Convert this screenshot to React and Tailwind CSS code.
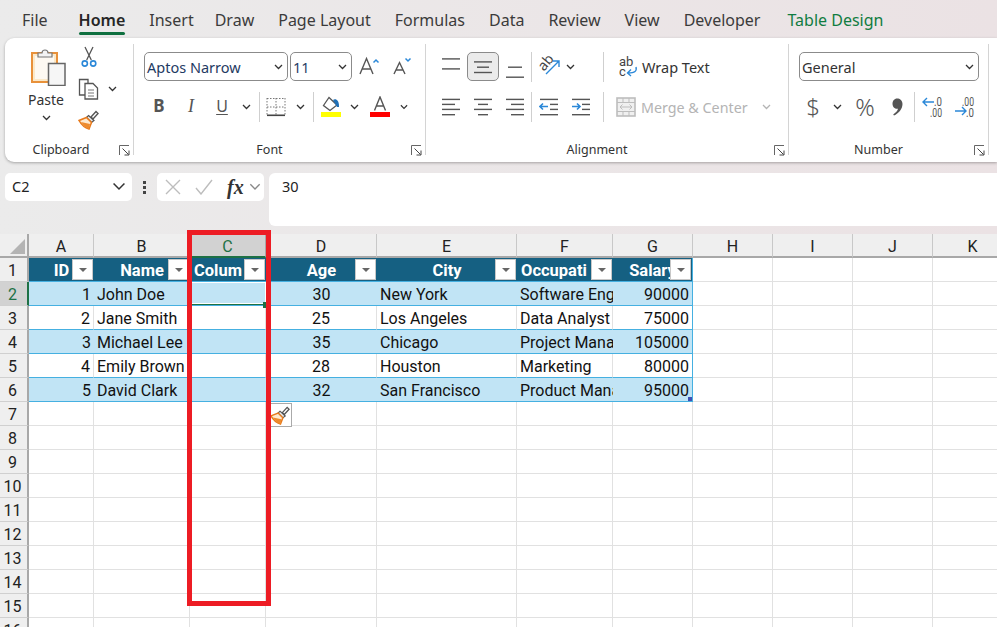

const UI = { fontFamily: '"Noto Sans", sans-serif' };

function Chev({ c = "#333", w = 9, cls = "" }) {
  return (
    <svg width={w} height={(w * 2) / 3} viewBox="0 0 9 6" className={cls}>
      <path d="M1 1l3.5 3.5L8 1" fill="none" stroke={c} strokeWidth={w > 9 ? 1 : 1.3} />
    </svg>
  );
}

function Launcher() {
  return (
    <svg width="11" height="11" viewBox="0 0 11 11">
      <path d="M.5 10V.5H10" fill="none" stroke="#666" />
      <path d="M3.5 3.5l6 6M10 5.5V10H5.5" fill="none" stroke="#444" />
    </svg>
  );
}

function Cell({ w, children, cls = "" }) {
  return (
    <div style={{ width: w }} className={"flex shrink-0 items-center justify-center " + cls}>
      {children}
    </div>
  );
}

function Sep() {
  return <div className="h-[30px] w-px shrink-0 bg-[#cfcfcf]" />;
}

function Lines({ rows }) {
  return (
    <svg width="20" height="20" viewBox="0 0 20 20" className="overflow-visible">
      {rows.map(([x, y, w], i) => (
        <rect key={i} x={x} y={y} width={w} height="1.4" fill="#555" />
      ))}
    </svg>
  );
}

function Group({ width, label, children, sep = true, shift = "pr-[20px]" }) {
  return (
    <div className="flex shrink-0" style={{ width }}>
      <div className="flex min-w-0 flex-1 flex-col">
        <div className="h-[100px]">{children}</div>
        <div className={"relative flex h-[24px] items-center justify-center text-[12.5px] text-[#333] " + shift}>
          {label}
          <span className="absolute right-[3px] top-[7px] flex">
            <Launcher />
          </span>
        </div>
      </div>
      {sep && <div className="mt-[6px] h-[111px] w-px bg-[#d4d4d4]" />}
    </div>
  );
}

function Select({ w, text, textCls = "text-[#1f3b63]" }) {
  return (
    <div
      style={{ width: w }}
      className="flex h-[29px] shrink-0 items-center justify-between rounded-[5px] border border-[#8b8b8b] bg-white pl-[2px] pr-[4px]"
    >
      <span className={"pt-[2px] text-[14.5px] " + textCls}>{text}</span>
      <Chev />
    </div>
  );
}

function PasteIcon() {
  return (
    <svg width="38" height="40" viewBox="0 0 38 40">
      <rect x="3" y="7" width="25" height="29" fill="#fbe9c9" stroke="#e8913a" strokeWidth="2" />
      <rect x="6" y="10" width="19" height="23" fill="#fdf9f2" />
      <path d="M9 11V7h4c0-4 6-4 6 0h4v4z" fill="#f3f3f3" stroke="#777" strokeWidth="1.2" />
      <rect x="19.5" y="17.5" width="16.5" height="22" fill="#f6f6f6" stroke="#666" strokeWidth="1.5" />
    </svg>
  );
}

function CutIcon() {
  return (
    <svg width="16" height="22" viewBox="0 0 16 22">
      <path d="M4 1l6.3 13M12 1L5.7 14" stroke="#555" strokeWidth="1.3" fill="none" />
      <circle cx="3.8" cy="17.5" r="2.6" fill="none" stroke="#2b88d8" strokeWidth="1.6" />
      <circle cx="12.2" cy="17.5" r="2.6" fill="none" stroke="#2b88d8" strokeWidth="1.6" />
    </svg>
  );
}

function CopyIcon() {
  return (
    <svg width="22" height="22" viewBox="0 0 22 22">
      <path d="M9 17H1.5V1.5H10V5" fill="#fff" stroke="#555" strokeWidth="1.3" />
      <path d="M7 5.5h8l4.5 4.5v11H7z" fill="#fff" stroke="#555" strokeWidth="1.3" />
      <path d="M10 12h6M10 15h6M10 18h6" stroke="#777" />
    </svg>
  );
}

function BrushIcon({ s = 21 }) {
  return (
    <svg width={s} height={s} viewBox="0 0 21 21">
      <path d="M13 8L18 2.5L20 4.5L15 10z" fill="#fff" stroke="#555" strokeWidth="1.4" />
      <path d="M10.5 6.5L16 11.5L13.5 13.5L8.5 8.5z" fill="#e8e8e8" stroke="#555" strokeWidth="1.2" />
      <path d="M8.5 8.5L13.5 13.5L11 20C7 19 3 15 1 11.5z" fill="#fde9cf" stroke="#e8791a" strokeWidth="1.5" />
      <path d="M3 13L12 15L11 20C7.5 19 5 16 3 13z" fill="#ed8b2d" />
    </svg>
  );
}

function GrowA({ small }) {
  return (
    <svg width="26" height="24" viewBox="0 0 26 24">
      {small ? (
        <path d="M4 19L9.5 7.5L15 19M6 15h7" fill="none" stroke="#555" strokeWidth="1.4" />
      ) : (
        <path d="M4 19L10.5 3.5L17 19M6.5 14h8" fill="none" stroke="#555" strokeWidth="1.4" />
      )}
      {small ? (
        <path d="M15.5 3.5l2.5 2.5 2.5-2.5" fill="none" stroke="#2b88d8" strokeWidth="1.5" />
      ) : (
        <path d="M17.5 7.5l2.5-2.5 2.5 2.5" fill="none" stroke="#2b88d8" strokeWidth="1.5" />
      )}
    </svg>
  );
}

function BorderIcon() {
  return (
    <svg width="20" height="20" viewBox="0 0 20 20">
      <path d="M1 1.5h18M1 10h18M1 1v17M10 1v17M19 1v17" stroke="#777" strokeDasharray="1.5 1.5" fill="none" />
      <rect x="1" y="17.5" width="18" height="1.6" fill="#444" />
    </svg>
  );
}

function FillIcon() {
  return (
    <svg width="20" height="22" viewBox="0 0 20 22">
      <path d="M8 1.5L16 9L9 14.5L2.5 9.5z" fill="#fff" stroke="#555" strokeWidth="1.3" />
      <path d="M12 4c3-2 6 1 6 6v1h-2z" fill="#1f6fb5" />
      <rect y="16" width="20" height="5" fill="#ffff00" />
    </svg>
  );
}

function ColorA() {
  return (
    <svg width="20" height="22" viewBox="0 0 20 22">
      <path d="M4.5 14.5L10 1l5.5 13.5M6.5 10h7" fill="none" stroke="#555" strokeWidth="1.4" />
      <rect y="16" width="20" height="5" fill="#ff0000" />
    </svg>
  );
}

function OrientIcon() {
  return (
    <svg width="22" height="22" viewBox="0 0 22 22" className="overflow-visible">
      <text x="-1" y="11" fontSize="14" fill="#444" transform="rotate(-50 7 7)" fontFamily="Noto Sans">ab</text>
      <path d="M7 18L20 5M14 5h6v6" fill="none" stroke="#2b88d8" strokeWidth="1.4" />
    </svg>
  );
}

function IndentIcon({ right }) {
  return (
    <svg width="20" height="20" viewBox="0 0 20 20">
      <rect x="1" y="1.7" width="18" height="1.4" fill="#555" />
      <rect x="11" y="6.7" width="8" height="1.4" fill="#555" />
      <rect x="11" y="11.7" width="8" height="1.4" fill="#555" />
      <rect x="1" y="17" width="18" height="1.4" fill="#555" />
      {right ? (
        <path d="M1 9.5h8M6 6.5l3 3-3 3" fill="none" stroke="#2b88d8" strokeWidth="1.6" />
      ) : (
        <path d="M9 9.5H1M4 6.5l-3 3 3 3" fill="none" stroke="#2b88d8" strokeWidth="1.6" />
      )}
    </svg>
  );
}

function WrapIcon() {
  return (
    <svg width="19" height="22" viewBox="0 0 19 22" className="overflow-visible">
      <text x="0" y="10" fontSize="13" fill="#444" fontFamily="Roboto">ab</text>
      <text x="0" y="20" fontSize="13" fill="#444" fontFamily="Roboto">c</text>
      <path d="M17 11c1 4-1 6-8 6M12 13.5L8.5 17l3.5 3" fill="none" stroke="#2b88d8" strokeWidth="1.4" />
    </svg>
  );
}

function MergeIcon() {
  return (
    <svg width="20" height="20" viewBox="0 0 20 20">
      <rect x="1" y="1" width="18" height="18" fill="#f0f0f0" stroke="#bdbdbd" strokeWidth="1.6" />
      <path d="M1 5.5h18M1 14.5h18M7 1v4M13 1v4M7 15v4M13 15v4" stroke="#bdbdbd" />
      <path d="M4 10h12M6.5 7.5L4 10l2.5 2.5M13.5 7.5L16 10l-2.5 2.5" fill="none" stroke="#bdbdbd" />
    </svg>
  );
}

function CommaIcon() {
  return (
    <svg width="11" height="18" viewBox="0 0 11 18">
      <path d="M5 0.5C8 0.5 10.5 2.5 10.5 6C10.5 11 6.5 15.5 2 17.5L1.2 16.5C3.8 14.8 5.6 12.8 6 10.8C3 11.3 0.5 9 0.5 5.8C0.5 2.8 2.5 0.5 5 0.5z" fill="#555" />
    </svg>
  );
}

function DecIcon({ more }) {
  const t = { fontSize: 12, fill: "#555", fontFamily: "Roboto", lengthAdjust: "spacingAndGlyphs" };
  return (
    <svg width="22" height="24" viewBox="0 0 22 24" className="overflow-visible">
      {more ? (
        <>
          <text x="8" y="11" textLength="12" {...t}>.00</text>
          <text x="12" y="22" textLength="8" {...t}>.0</text>
          <path d="M1 16h11M8 12l4 4-4 4" fill="none" stroke="#2b88d8" strokeWidth="1.4" />
        </>
      ) : (
        <>
          <text x="12" y="11" textLength="8" {...t}>.0</text>
          <text x="8" y="22" textLength="12" {...t}>.00</text>
          <path d="M12 7H1M5 3L1 7l4 4" fill="none" stroke="#2b88d8" strokeWidth="1.4" />
        </>
      )}
    </svg>
  );
}

function Tabs() {
  return (
    <div className="flex h-[38px] items-start gap-[24px] pl-[22px] pt-[8px] text-[16px] leading-[24px] text-[#3b3b3b]">
      <span className="mr-[7px]">File</span>
      <span className="relative font-semibold text-[#262626]">
        Home
        <span className="absolute bottom-[-3px] left-0 right-0 h-[3px] rounded-sm bg-[#0f7040]" />
      </span>
      <span className="mr-[-3px]">Insert</span>
      <span>Draw</span>
      <span>Page Layout</span>
      <span>Formulas</span>
      <span>Data</span>
      <span>Review</span>
      <span>View</span>
      <span className="mr-[3px]">Developer</span>
      <span className="text-[#107c41]">Table Design</span>
    </div>
  );
}

function Ribbon() {
  return (
    <div className="ml-[5px] flex h-[124px] rounded-l-[9px] bg-white shadow-[0_1px_3px_rgba(0,0,0,0.3)]">
      <Group width={129} label="Clipboard" shift="pr-[16px]">
        <div className="flex h-full">
          <div className="ml-[11px] flex w-[60px] flex-col items-center pt-[8px]">
            <span className="ml-[4px] flex"><PasteIcon /></span>
            <span className="mt-[4px] text-[14px] leading-[20px] text-[#333]">Paste</span>
            <Chev cls="mt-[5px]" />
          </div>
          <div className="flex w-[48px] flex-col pl-[1px] pt-[7px]">
            <Cell w={24} cls="h-[24px]"><CutIcon /></Cell>
            <div className="mt-[8px] flex h-[24px] items-center">
              <Cell w={24}><CopyIcon /></Cell>
              <Chev cls="ml-[7px]" />
            </div>
            <Cell w={22} cls="mt-[6px] h-[24px]"><BrushIcon /></Cell>
          </div>
        </div>
      </Group>

      <Group width={292} label="Font">
        <div className="pl-[10px] pt-[14px]">
          <div className="flex h-[29px] items-center">
            <Select w={144} text="Aptos Narrow" />
            <div className="ml-[2px]"><Select w={62} text="11" /></div>
            <Cell w={34}><GrowA /></Cell>
            <Cell w={34}><GrowA small /></Cell>
          </div>
          <div className="mt-[11px] flex h-[30px] items-center text-[#555]">
            <Cell w={30} cls="pb-[2px] text-[17px] font-bold">B</Cell>
            <Cell w={34} cls="pb-[2px] font-['Liberation_Serif'] text-[18px] italic">I</Cell>
            <Cell w={28} cls="pb-[2px] text-[16px] underline underline-offset-2">U</Cell>
            <Cell w={20}><Chev /></Cell>
            <div className="ml-[3px]"><Sep /></div>
            <Cell w={32}><BorderIcon /></Cell>
            <Cell w={16}><Chev /></Cell>
            <div className="ml-[5px]"><Sep /></div>
            <Cell w={34}><FillIcon /></Cell>
            <Cell w={12}><Chev /></Cell>
            <Cell w={40}><ColorA /></Cell>
            <Cell w={8}><Chev /></Cell>
          </div>
        </div>
      </Group>

      <Group width={363} label="Alignment">
        <div className="pl-[9px] pt-[14px]">
          <div className="flex h-[29px] items-center">
            <Cell w={32}><Lines rows={[[1, 1.2, 18], [1, 11.2, 18]]} /></Cell>
            <Cell w={32}>
              <div className="flex h-[29px] w-[32px] items-center justify-center rounded-[5px] border border-[#8b8b8b] bg-[#ebebeb]">
                <Lines rows={[[1, 4.2, 18], [4, 9.5, 12], [1, 14.8, 18]]} />
              </div>
            </Cell>
            <Cell w={32}><Lines rows={[[3, 9.5, 14], [1, 19.5, 18]]} /></Cell>
            <Sep />
            <Cell w={30} cls="ml-[3px]"><OrientIcon /></Cell>
            <Cell w={10}><Chev /></Cell>
            <div className="ml-[28px]"><Sep /></div>
            <div className="ml-[15px] flex items-center">
              <WrapIcon />
              <span className="ml-[4px] pt-[2px] text-[14.5px] text-[#333]">Wrap Text</span>
            </div>
          </div>
          <div className="mt-[11px] flex h-[30px] items-center">
            <Cell w={32}><Lines rows={[[1, 1.7, 18], [1, 6.7, 13], [1, 11.7, 18], [1, 17, 13]]} /></Cell>
            <Cell w={32}><Lines rows={[[1, 1.7, 18], [5, 6.7, 10], [1, 11.7, 18], [5, 17, 10]]} /></Cell>
            <Cell w={32}><Lines rows={[[1, 1.7, 18], [6, 6.7, 13], [1, 11.7, 18], [6, 17, 13]]} /></Cell>
            <Sep />
            <Cell w={32} cls="ml-px"><IndentIcon /></Cell>
            <Cell w={32}><IndentIcon right /></Cell>
            <div className="ml-[6px]"><Sep /></div>
            <div className="ml-[12px] flex items-center">
              <MergeIcon />
              <span className="ml-[5px] pt-[2px] text-[14.3px] text-[#b4b4b4]">Merge &amp; Center</span>
              <Chev c="#b4b4b4" cls="ml-[14px]" />
            </div>
          </div>
        </div>
      </Group>

      <Group width={200} label="Number">
        <div className="pl-[10px] pt-[14px]">
          <Select w={180} text="General" textCls="text-[#333]" />
          <div className="mt-[11px] flex h-[30px] items-center text-[#555]">
            <Cell w={28} cls="text-[24px] font-light">$</Cell>
            <Cell w={20}><Chev /></Cell>
            <Cell w={36} cls="text-[24px] font-light">%</Cell>
            <Cell w={28}><CommaIcon /></Cell>
            <div className="ml-[3px]"><Sep /></div>
            <Cell w={36}><DecIcon /></Cell>
            <Cell w={28}><DecIcon more /></Cell>
          </div>
        </div>
      </Group>
    </div>
  );
}

function FormulaBar() {
  return (
    <div className="mt-[11px] flex h-[53px] items-start pl-[5px]">
      <div className="flex h-[28px] w-[127px] items-center justify-between rounded-[5px] bg-white pl-[7px] pr-[6px] text-[14.5px] text-[#222]">
        C2
        <Chev w={14} />
      </div>
      <div className="flex h-[28px] w-[25px] flex-col items-center justify-center gap-[2px]">
        <span className="h-[3px] w-[3px] bg-[#444]" />
        <span className="h-[3px] w-[3px] bg-[#444]" />
        <span className="h-[3px] w-[3px] bg-[#444]" />
      </div>
      <div className="flex h-[28px] w-[107px] items-center rounded-[5px] bg-white pl-[8px]">
        <svg width="16" height="16" viewBox="0 0 16 16"><path d="M1 1l14 14M15 1L1 15" stroke="#bdbdbd" strokeWidth="1.4" /></svg>
        <svg className="ml-[14px]" width="18" height="16" viewBox="0 0 18 16"><path d="M1 9l5 6L17 1" fill="none" stroke="#bdbdbd" strokeWidth="1.4" /></svg>
        <span className="ml-[14px] font-['Liberation_Serif'] text-[20px] font-bold italic leading-[20px] text-[#333]">fx</span>
        <Chev c="#888" w={12} cls="ml-[5px]" />
      </div>
      <div className="ml-[5px] flex h-[53px] flex-1 items-start rounded-l-[6px] bg-white pl-[13px] pt-[3px] text-[14.5px] text-[#222]">
        30
      </div>
    </div>
  );
}

const CELL = { fontFamily: '"Roboto", sans-serif' };
const cols = [
  ["A", 65], ["B", 96], ["C", 76], ["D", 111], ["E", 140], ["F", 96], ["G", 80],
  ["H", 80], ["I", 80], ["J", 80], ["K", 80],
];
const heads = ["ID", "Name", "Colum", "Age", "City", "Occupati", "Salary"];
const headAlign = ["justify-center", "justify-center", "justify-start pl-[4px]", "justify-center", "justify-center", "justify-start pl-[4px]", "justify-center"];
const rows = [
  ["1", "John Doe", "", "30", "New York", "Software Engineer", "90000"],
  ["2", "Jane Smith", "", "25", "Los Angeles", "Data Analyst", "75000"],
  ["3", "Michael Lee", "", "35", "Chicago", "Project Manager", "105000"],
  ["4", "Emily Brown", "", "28", "Houston", "Marketing", "80000"],
  ["5", "David Clark", "", "32", "San Francisco", "Product Manager", "95000"],
];
const align = ["justify-end", "justify-start", "justify-start", "justify-center", "justify-start", "justify-start", "justify-end"];

function RowHead({ n, active }) {
  return (
    <div
      className={
        "flex h-[24px] w-[29px] shrink-0 items-center justify-center border-b border-b-[#d0d0d0] pr-[2px] pt-[3px] text-[16px] " +
        (active
          ? "border-r-2 border-r-[#1e7145] bg-[#d2d2d2] text-[#1e7145]"
          : "border-r-2 border-r-[#a8a8a8] bg-[#efefef] text-[#222]")
      }
    >
      {n}
    </div>
  );
}

function FilterBtn() {
  return (
    <span className="absolute bottom-px right-px top-px flex w-[21px] items-center justify-center border border-[#c8c8c8] bg-white">
      <span className="h-0 w-0 border-x-[4px] border-t-[4px] border-x-transparent border-t-[#666]" />
    </span>
  );
}

function Grid() {
  return (
    <div className="text-[#111]" style={CELL}>
      <div className="flex h-[24px]">
        <div className="relative h-[24px] w-[29px] shrink-0 border-b-2 border-r-2 border-[#a8a8a8] bg-[#efefef]">
          <span className="absolute bottom-[2px] right-[2px] h-0 w-0 border-b-[15px] border-l-[15px] border-b-[#b4b4b4] border-l-transparent" />
        </div>
        {cols.map(([c, w]) => (
          <div
            key={c}
            style={{ width: w }}
            className={
              "flex shrink-0 items-center justify-center border-b-2 border-r pt-[4px] text-[16px] " +
              (c === "C"
                ? "border-b-[#1e7145] border-r-[#a8a8a8] bg-[#d2d2d2] text-[#1e7145]"
                : "border-b-[#a8a8a8] border-r-[#c8c8c8] bg-[#efefef] text-[#222]")
            }
          >
            {c}
          </div>
        ))}
      </div>

      <div className="flex h-[24px]">
        <RowHead n={1} />
        {cols.map(([c, w], i) =>
          i < 7 ? (
            <div
              key={c}
              style={{ width: w }}
              className={"relative flex shrink-0 items-center overflow-hidden whitespace-nowrap border-b border-b-[#45b0e1] bg-[#156082] pt-[3px] text-[16.5px] font-bold text-white " + headAlign[i] + (i === 6 ? " border-r border-r-[#45b0e1]" : "")}
            >
              {heads[i]}
              <FilterBtn />
            </div>
          ) : (
            <div key={c} style={{ width: w }} className="shrink-0 border-b border-r border-[#e1e1e1] bg-white" />
          )
        )}
      </div>

      {Array.from({ length: 15 }, (_, r) => {
        const n = r + 2;
        const data = rows[r];
        return (
          <div key={n} className="flex h-[24px]">
            <RowHead n={n} active={n === 2} />
            {cols.map(([c, w], i) => {
              const inTable = data && i < 7;
              const band = inTable && r % 2 === 0;
              const last = inTable && i === 6;
              return (
                <div
                  key={c}
                  style={{ width: w }}
                  className={
                    "relative flex shrink-0 items-center overflow-hidden whitespace-nowrap border-b px-[3px] pt-[3px] text-[16px] " +
                    (inTable ? align[i] + " border-b-[#45b0e1] " : "border-b-[#e1e1e1] ") +
                    (band ? "bg-[#c1e4f5] " : "bg-white ") +
                    (last ? "border-r border-r-[#45b0e1] " : band ? "" : "border-r border-r-[#e1e1e1] ")
                  }
                >
                  {inTable ? data[i] : ""}
                  {n === 2 && i === 2 && (
                    <span className="absolute inset-x-0 bottom-[-1px] top-0 border-b-2 border-b-[#1e7145] shadow-[inset_0_0_0_1px_#fff]" />
                  )}
                  {n === 6 && i === 6 && (
                    <span className="absolute bottom-0 right-0 h-[4px] w-[4px] bg-[#3f51b5]" />
                  )}
                </div>
              );
            })}
          </div>
        );
      })}
    </div>
  );
}

export default function App() {
  return (
    <div className="relative h-[627px] w-[997px] overflow-hidden bg-gradient-to-r from-[#ebebeb] to-[#ebe2e4]" style={UI}>
      <Tabs />
      <Ribbon />
      <FormulaBar />
      <div className="mt-[8px] bg-white">
        <Grid />
      </div>
      <span className="absolute left-[263px] top-[302px] h-[6px] w-[3px] bg-[#1e7145]" />
      <div className="absolute left-[268px] top-[403px] flex h-[24px] w-[24px] items-center justify-center border border-[#aaa] bg-white">
        <BrushIcon s={20} />
      </div>
      <div className="absolute left-[187px] top-[230px] h-[376px] w-[84px] border-[5px] border-[#ed1c24]" />
    </div>
  );
}
